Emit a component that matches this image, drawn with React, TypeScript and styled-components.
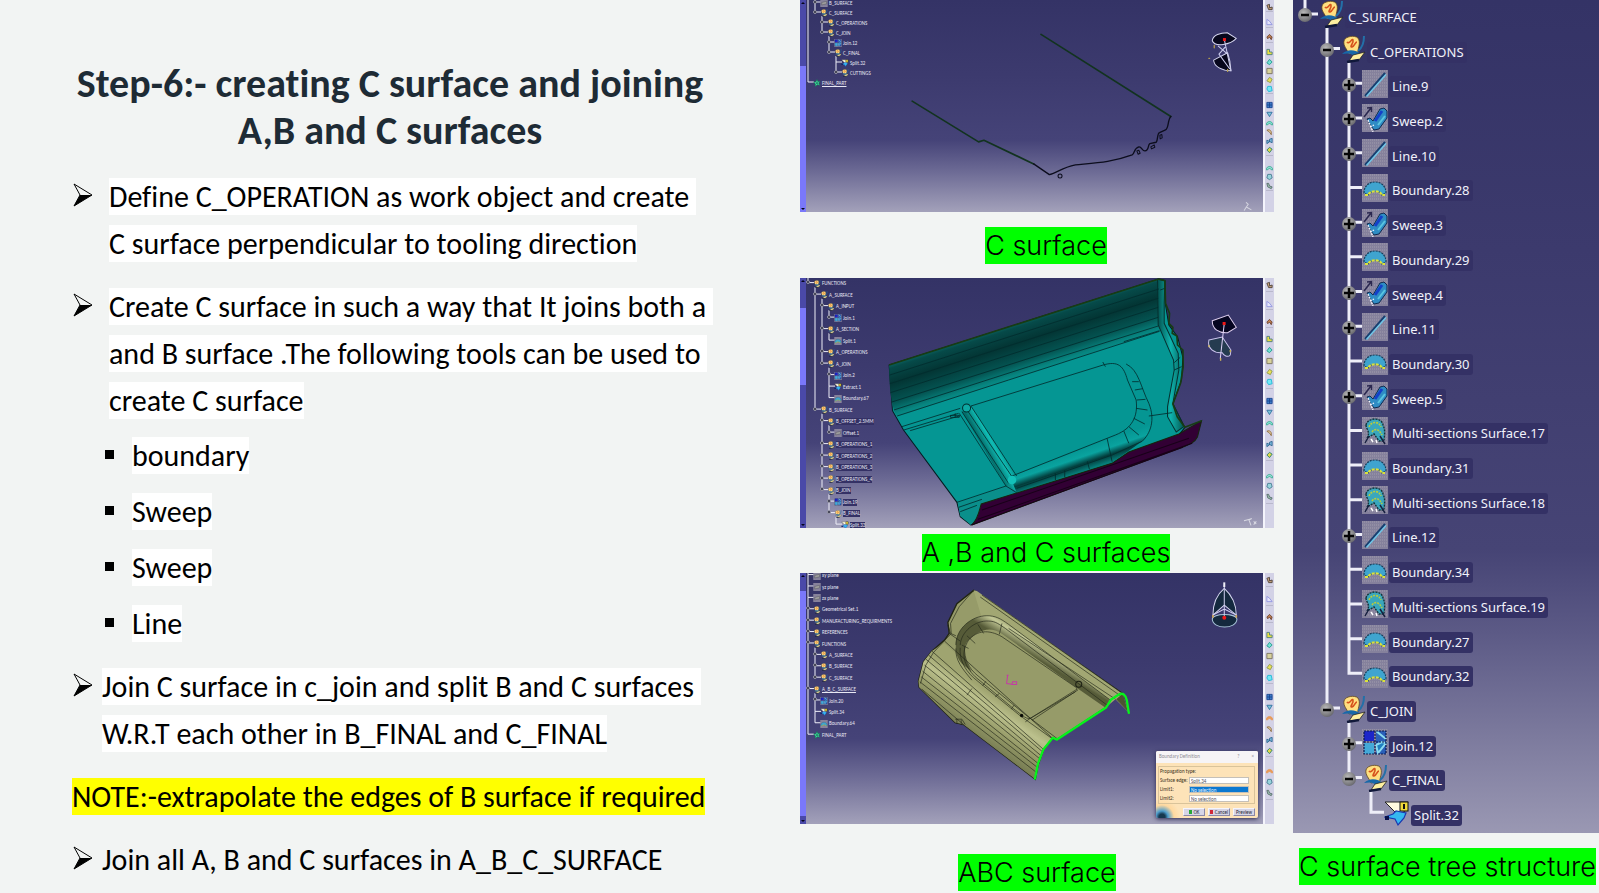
import React from 'react';
import styled, { createGlobalStyle } from 'styled-components';

const GlobalStyle = createGlobalStyle`
  * { box-sizing: border-box; }
  body { margin: 0; background: #f2f4f3; }
  ul { list-style: none; margin: 0; padding: 0; }
`;

const Slide = styled.main`
  display: grid;
  grid-template-columns: 800fr 474fr 325fr;
  min-height: 100vh;
  background: #f2f4f3;
  color: #000;
  font-family: Carlito, Lato, sans-serif;
  font-variant-ligatures: none;
`;

/* ---------- notes column ---------- */

const Notes = styled.section`
  display: flex;
  flex-direction: column;
  gap: 19px;
  padding: 60px 20px 0 72px;
  font-size: 30px;
  line-height: 47px;
`;

const Title = styled.h1`
  margin: 0;
  padding-right: 72px;
  font-size: 40px;
  line-height: 47px;
  font-weight: 700;
  color: #1e2b35;
  text-align: center;
  white-space: nowrap;
`;

const Points = styled.ul`
  display: flex;
  flex-direction: column;
  gap: 16px;
`;

const Point = styled.li<{ $indent: number }>`
  display: grid;
  grid-template-columns: ${(p) => p.$indent}px 1fr;
`;

const Arrow = styled.svg`
  width: 22px;
  height: 24px;
  margin-top: 10px;
`;

const SubPoints = styled.ul`
  display: flex;
  flex-direction: column;
  gap: 9px;
  margin-top: -8px;
  padding-left: 33px;
`;

const SubPoint = styled.li`
  display: flex;
  align-items: center;
  gap: 18px;
  &::before {
    content: '';
    width: 9px;
    height: 9px;
    margin-bottom: 3px;
    background: #000;
  }
`;

const Line = styled.div`
  white-space: pre;
`;

const Mark = styled.span<{ $color: string }>`
  background: ${(p) => p.$color};
`;

const ArrowBullet = () => (
  <Arrow viewBox="0 0 22 24" aria-hidden="true">
    <path d="M2 1 L20 12 L2 23 L8 12 Z" fill="#f2f4f3" stroke="#000" strokeWidth="1" />
    <path d="M8 12 L20 12 L2 23 Z" fill="#000" />
  </Arrow>
);

const Text = ({ lines, color = '#fff' }: { lines: string[]; color?: string }) => (
  <div>
    {lines.map((l) => (
      <Line key={l}>
        <Mark $color={color}>{l}</Mark>
      </Line>
    ))}
  </div>
);

/* ---------- captions ---------- */

const CaptionBar = styled.div<{ $height: number; $top: number; $shift?: number }>`
  min-height: ${(p) => p.$height}px;
  padding-top: ${(p) => p.$top}px;
  padding-left: ${(p) => p.$shift || 0}px;
  text-align: center;
`;

const Caption = styled.span`
  display: inline-block;
  background: #00ff00;
  font-family: Inter, 'Liberation Sans', sans-serif;
  font-weight: 300;
  font-size: 27px;
  line-height: 37px;
  white-space: nowrap;
`;

/* ---------- tree views ---------- */

type Kind = 'set' | 'line' | 'sweep' | 'boundary' | 'multi' | 'join' | 'split' | 'body' | 'plane';
type Node = { t: string; l: number; k: Kind; s?: '+' | '-'; u?: boolean };

const Glyph = ({ kind }: { kind: Kind }) => {
  const boxed = kind === 'line' || kind === 'sweep' || kind === 'boundary' || kind === 'multi' || kind === 'join' || kind === 'plane';
  return (
    <svg viewBox="0 0 26 28" width="100%" height="100%" aria-hidden="true">
      {boxed && <rect width="26" height="28" fill="#85819c" />}
      {boxed && <path d="M0 1H26M0 4H26M0 7H26M0 10H26M0 13H26M0 16H26M0 19H26M0 22H26M0 25H26" stroke="#a09cad" strokeWidth="1" strokeDasharray="1 1" />}
      {kind === 'line' && (
        <>
          <path d="M3 26L23 3" stroke="#173f70" strokeWidth="2" />
          <path d="M4.500 26.500L24 4.500" stroke="#6fc6e8" strokeWidth="1.500" />
        </>
      )}
      {kind === 'sweep' && (
        <>
          <path d="M2 13L9 4M5 4L9.500 3.500L9.500 8" stroke="#2b2850" strokeWidth="1.500" fill="none" />
          <path d="M5 15L8 14L11 17L18 5L22 4L25 7V14L17 25L12 26L9 22Z" fill="#2f8cc4" stroke="#102a50" strokeWidth="1" />
          <path d="M13 17L20 7" stroke="#1440c8" strokeWidth="3" />
          <path d="M16 21L23 12" stroke="#59c5e0" strokeWidth="2" />
          <path d="M6 16L11 28M8 23L12 21" stroke="#f4f4ff" strokeWidth="1.300" strokeDasharray="2 1" />
        </>
      )}
      {kind === 'boundary' && (
        <>
          <path d="M2 19C2 12 7 8 13 8C19 8 24 12 24 19L20 21C18 16 8 16 6 21Z" fill="#3fa4cf" stroke="#16405e" strokeWidth="1.200" strokeDasharray="2 1" />
          <path d="M3 21L6 21C8 16 18 16 20 21L23 21" fill="none" stroke="#dbe23a" strokeWidth="2" strokeDasharray="3 1" />
        </>
      )}
      {kind === 'multi' && (
        <>
          <path d="M4 8C6 0 20 0 21 8C24 14 22 20 22 24L17 24L12 17L5 21C9 15 4 12 4 8Z" fill="#3aa7bd" stroke="#12353c" strokeWidth="1.400" strokeDasharray="2 1" />
          <path d="M7 10C9 4 17 4 19 10M10 15C13 11 17 12 20 18" fill="none" stroke="#b9cc3c" strokeWidth="1.600" strokeDasharray="2 1" />
          <path d="M3 26L7 19M18 19L23 27" stroke="#182040" strokeWidth="1.500" />
          <path d="M9 22L11 25M14 23L15 26" stroke="#fff" strokeWidth="1.400" />
        </>
      )}
      {kind === 'join' && (
        <>
          <path d="M2 2H12V12H2Z" fill="#1c25c9" />
          <path d="M2 14H12V25H2Z" fill="#44a9d8" />
          <path d="M14 2H24V25H14Z" fill="#2a5fb8" />
          <path d="M14 2L24 10M14 16L20 13L24 14L16 24Z" stroke="#8bdcf0" strokeWidth="2" fill="#1f7fc0" />
          <path d="M2 13H24M13 2V25M2 2H24V25H2Z" stroke="#0c1a50" strokeWidth="1.200" strokeDasharray="2 1" fill="none" />
        </>
      )}
      {kind === 'set' && (
        <>
          <path d="M4 6C5 1 15 0 18 3C21 8 18 12 18 17L9 19C7 14 3 11 4 6Z" fill="#ffdf80" stroke="#5a4320" strokeWidth="0.800" />
          <path d="M7 7C9 10 12 3 13 5C14 8 9 12 12 12C15 11 15 7 17 7" fill="none" stroke="#d6521c" strokeWidth="1.600" />
          <path d="M24 1C24 8 22 13 18 16" fill="none" stroke="#2370a8" strokeWidth="2" />
          <path d="M2 19C8 13 16 15 21 19L16 23C12 18 8 18 2 19Z" fill="#1868a8" />
          <path d="M13 20L25 17L19 25L9 26Z" fill="#fff0a0" stroke="#222" strokeWidth="0.800" />
          <path d="M7 27L19 25" stroke="#10183a" strokeWidth="2.500" />
        </>
      )}
      {kind === 'split' && (
        <>
          <path d="M1 3L24 3L20 13L12 14Z" fill="#fffbe0" stroke="#222" strokeWidth="1" />
          <rect x="16" y="3" width="8" height="9" fill="#f0d93a" stroke="#111" />
          <path d="M20 5V10" stroke="#111" strokeWidth="2" />
          <path d="M1 18L9 15L12 12L22 14L20 19L14 26L11 20Z" fill="#35b8f0" stroke="#1a38b0" strokeWidth="1.200" />
          <rect x="1" y="17" width="4" height="4" fill="#08104a" />
        </>
      )}
      {kind === 'body' && (
        <>
          <path d="M13 2L16 9L24 8L19 14L23 22L14 20L7 26L7 17L1 11L9 10Z" fill="#42dba0" stroke="#0f7050" strokeWidth="2" />
          <circle cx="13" cy="14" r="3" fill="#0d5a48" />
        </>
      )}
      {kind === 'plane' && <path d="M5 12L22 8V17L5 21Z" fill="#9e9e9e" stroke="#4d4d55" strokeWidth="1.500" />}
    </svg>
  );
};

const GuideLines = styled.svg`
  position: absolute;
  top: 0;
  left: 0;
  width: 120px;
  height: 100%;
`;

/* connector lines: every row is ten units tall, x positions are in pixels */
const Guides = ({ nodes, first, step, stub, width }: { nodes: Node[]; first: number; step: number; stub: number; width: number }) => {
  const d: string[] = [];
  nodes.forEach((n, i) => {
    const x = first + n.l * step;
    let j = i - 1;
    while (j >= 0 && nodes[j].l > n.l) j--;
    const y = i * 10 + 4;
    const from = j < 0 ? 0 : nodes[j].l === n.l ? j * 10 + 4 : j * 10 + 8;
    d.push(`M${x} ${from}V${y}H${x + stub}`);
  });
  return (
    <GuideLines viewBox={`0 0 120 ${nodes.length * 10}`} preserveAspectRatio="none" aria-hidden="true">
      <path d={d.join('')} fill="none" stroke="#eeeef8" strokeWidth={width} vectorEffect="non-scaling-stroke" />
    </GuideLines>
  );
};

const BigTree = styled.ul`
  position: relative;
  flex: 1;
  display: grid;
  grid-auto-rows: 1fr;
  overflow: hidden;
  background: linear-gradient(#343366 0%, #3c3a6d 30%, #464475 66%, #5c5a86 76%, #9a98b3 100%);
`;

const BigRow = styled.li<{ $level: number }>`
  position: relative;
  display: flex;
  align-items: center;
  padding-left: ${(p) => 5 + p.$level * 22}px;
`;

const Toggle = styled.button<{ $hidden: boolean }>`
  flex: none;
  visibility: ${(p) => (p.$hidden ? 'hidden' : 'visible')};
  width: 14px;
  height: 14px;
  margin: 0 6px 4px 0;
  padding: 0;
  border: 0;
  border-radius: 50%;
  background: radial-gradient(circle at 40% 35%, #b9b9b9, #7a7a7e 60%, #4c4c55);
  svg { display: block; }
`;

const BigIcon = styled.span`
  flex: none;
  width: 26px;
  height: 28px;
  margin: 0 1px 6px 0;
`;

const BigLabel = styled.span`
  padding: 0 3px;
  border-radius: 3px;
  background: #343165;
  color: #f1f1fa;
  font-family: 'Noto Sans', 'Open Sans', sans-serif;
  font-size: 13px;
  line-height: 21px;
  white-space: nowrap;
`;

const structure: Node[] = [
  { t: 'C_SURFACE', l: 0, k: 'set', s: '-' },
  { t: 'C_OPERATIONS', l: 1, k: 'set', s: '-' },
  { t: 'Line.9', l: 2, k: 'line', s: '+' },
  { t: 'Sweep.2', l: 2, k: 'sweep', s: '+' },
  { t: 'Line.10', l: 2, k: 'line', s: '+' },
  { t: 'Boundary.28', l: 2, k: 'boundary' },
  { t: 'Sweep.3', l: 2, k: 'sweep', s: '+' },
  { t: 'Boundary.29', l: 2, k: 'boundary' },
  { t: 'Sweep.4', l: 2, k: 'sweep', s: '+' },
  { t: 'Line.11', l: 2, k: 'line', s: '+' },
  { t: 'Boundary.30', l: 2, k: 'boundary' },
  { t: 'Sweep.5', l: 2, k: 'sweep', s: '+' },
  { t: 'Multi-sections Surface.17', l: 2, k: 'multi' },
  { t: 'Boundary.31', l: 2, k: 'boundary' },
  { t: 'Multi-sections Surface.18', l: 2, k: 'multi' },
  { t: 'Line.12', l: 2, k: 'line', s: '+' },
  { t: 'Boundary.34', l: 2, k: 'boundary' },
  { t: 'Multi-sections Surface.19', l: 2, k: 'multi' },
  { t: 'Boundary.27', l: 2, k: 'boundary' },
  { t: 'Boundary.32', l: 2, k: 'boundary' },
  { t: 'C_JOIN', l: 1, k: 'set', s: '-' },
  { t: 'Join.12', l: 2, k: 'join', s: '+' },
  { t: 'C_FINAL', l: 2, k: 'set', s: '-' },
  { t: 'Split.32', l: 3, k: 'split' },
];

const StructureTree = () => (
  <BigTree>
    <Guides nodes={structure} first={12} step={22} stub={13} width={3} />
    {structure.map((n) => (
      <BigRow key={n.t} $level={n.l}>
        <Toggle type="button" $hidden={!n.s} aria-label={n.s === '+' ? 'Expand' : 'Collapse'}>
          <svg viewBox="0 0 14 14" width="14" height="14">
            <path d={n.s === '+' ? 'M2 7H12M7 2V12' : 'M3 7H11'} stroke="#050505" strokeWidth="2.500" />
          </svg>
        </Toggle>
        <BigIcon><Glyph kind={n.k} /></BigIcon>
        <BigLabel>{n.t}</BigLabel>
      </BigRow>
    ))}
  </BigTree>
);

/* ---------- modelling windows ---------- */

const Viewports = styled.section`
  display: flex;
  flex-direction: column;
`;

const Window = styled.div<{ $ratio: string }>`
  display: flex;
  width: 100%;
  aspect-ratio: ${(p) => p.$ratio};
  overflow: hidden;
`;

const Rail = styled.div<{ $from: number; $to: number }>`
  flex: 0 0 6px;
  display: flex;
  flex-direction: column;
  justify-content: space-between;
  align-items: center;
  background: linear-gradient(#4a49a8 ${(p) => p.$from}%, #7a78fa ${(p) => p.$from}% ${(p) => p.$to}%, #4a49a8 ${(p) => p.$to}%);
  &::before,
  &::after {
    content: '';
    border: 2px solid transparent;
  }
  &::before { border-bottom-color: #05051c; }
  &::after { border-top-color: #05051c; }
`;

const Scene = styled.div`
  position: relative;
  flex: 1;
  overflow: hidden;
  background: linear-gradient(#343366 0%, #3c3a6e 35%, #454378 66%, #6a6893 80%, #a3a1ba 100%);
`;

const Drawing = styled.svg`
  position: absolute;
  inset: 0;
  width: 100%;
  height: 100%;
`;

const SmallTree = styled.ul<{ $top: number; $height: number }>`
  position: absolute;
  top: ${(p) => p.$top}px;
  left: 0;
  height: ${(p) => p.$height}px;
  display: grid;
  grid-auto-rows: 1fr;
`;

const SmallRow = styled.li<{ $level: number; $underline?: boolean }>`
  position: relative;
  display: flex;
  align-items: center;
  gap: 1px;
  min-height: 0;
  padding-left: ${(p) => 7 + p.$level * 7}px;
  color: #e8e8f4;
  font-family: Carlito, Lato, sans-serif;
  font-size: 5px;
  line-height: 7px;
  white-space: nowrap;
  text-decoration: ${(p) => (p.$underline ? 'underline' : 'none')};
`;

const SmallIcon = styled.span`
  width: 8px;
  height: 8px;
  display: block;
  svg { display: block; }
`;

const SmallLabel = styled.span<{ $boxed: boolean }>`
  background: ${(p) => (p.$boxed ? '#343165' : 'transparent')};
`;

const Dot = styled.span`
  position: absolute;
  left: 0;
  width: 4px;
  height: 4px;
  border-radius: 50%;
  background: #26263a;
  border: 1px solid #9a9aa8;
`;

const DotSlot = styled.span<{ $level: number }>`
  position: absolute;
  left: ${(p) => p.$level * 7}px;
  top: 2px;
`;

const MiniTree = ({ nodes, top, height, boxedFrom = 99 }: { nodes: Node[]; top: number; height: number; boxedFrom?: number }) => (
  <SmallTree $top={top} $height={height}>
    <Guides nodes={nodes} first={2} step={7} stub={6} width={1} />
    {nodes.map((n, i) => (
      <SmallRow key={n.t} $level={n.l} $underline={n.u}>
        {n.s && <DotSlot $level={n.l}><Dot /></DotSlot>}
        <SmallIcon><Glyph kind={n.k} /></SmallIcon>
        <SmallLabel $boxed={i >= boxedFrom}>{n.t}</SmallLabel>
      </SmallRow>
    ))}
  </SmallTree>
);

const ToolBar = styled.div`
  flex: 0 0 11px;
  display: flex;
  flex-direction: column;
  padding: 2px 1px 0 1px;
  border-left: 2px solid #f4f4fc;
  background: #d3d2e6;
`;

const Tool = styled.button`
  flex: 11 1 0;
  min-height: 0;
  padding: 0;
  border: 0;
  background: none;
  display: flex;
  align-items: center;
  justify-content: center;
  svg { display: block; flex: none; }
`;

const Divider = styled.div<{ $size: number }>`
  flex: ${(p) => p.$size} 1 0;
  border-top: 1px solid #b9b8cc;
`;

const toolIcons: [string, string, string][] = [
  ['M1 2L4 1V5L7 4V7H3Z', '#4b4038', '#c9a27c'],
  ['M1 7V1L4 3L7 7Z', '#8f92e0', '#e4e4fa'],
  ['M1 4L4 1L7 4L6 7L4 4L2 6Z', '#6a4030', '#c08050'],
  ['M1 1H4V4H7V7H1Z', '#4d7d80', '#e8e040'],
  ['M4 1L7 4L4 7L1 5Z', '#1c9a8c', '#74e0d4'],
  ['M1 1H7V7H1Z', '#77705c', '#d8d29c'],
  ['M1 5L4 1L7 3L5 7Z', '#8a9a48', '#ecdf58'],
  ['M2 1H6L7 6L3 7L1 4Z', '#1cb7d6', '#74e8f4'],
  ['M1 1H7V7H1ZM4 1V7M1 4H7', '#1a4590', '#3c7cc8'],
  ['M1 2L7 2L4 7Z', '#2f70a0', '#7ec4d8'],
  ['M0 6C1 1 7 1 8 6L6 6C5 4 3 4 2 6Z', '#3aa890', '#7fe0d0'],
  ['M1 2C5 0 7 4 6 7L4 4Z', '#8c6c40', '#e8cfa0'],
  ['M1 3V7L4 5V2L7 1V6Z', '#2d6590', '#78b8dc'],
  ['M1 4L4 1L7 3L4 7Z', '#258068', '#e2d848'],
  ['M0 6C1 1 7 1 8 6L6 6C5 4 3 4 2 6Z', '#3aa890', '#8fe0d4'],
  ['M2 1L6 1L7 5L4 7L1 5Z', '#447a90', '#98d4dc'],
  ['M1 1L3 1L4 4L7 5L6 7L2 5Z', '#556a68', '#a0c4b4'],
];

const dividers: Record<number, number> = { 1: 7, 2: 6, 3: 6, 8: 7, 14: 9 };

const Tools = ({ arc = '' }: { arc?: string }) => (
  <ToolBar>
    {toolIcons.map(([d, stroke, fill], i) => (
      <React.Fragment key={i}>
        {dividers[i] && <Divider $size={dividers[i]} />}
        <Tool type="button" aria-label={`Tool ${i + 1}`}>
          <svg viewBox="0 0 8 8" width="7" height="8">
            <path d={d} fill={(i === 10 || i === 14) && arc ? arc : fill} stroke={(i === 10 || i === 14) && arc ? arc : stroke} />
          </svg>
        </Tool>
      </React.Fragment>
    ))}
    <Divider $size={25} />
  </ToolBar>
);

const treeOne: Node[] = [
  { t: 'B_SURFACE', l: 1, k: 'plane', s: '+' },
  { t: 'C_SURFACE', l: 1, k: 'set', s: '-' },
  { t: 'C_OPERATIONS', l: 2, k: 'set', s: '+' },
  { t: 'C_JOIN', l: 2, k: 'set', s: '-' },
  { t: 'Join.12', l: 3, k: 'join', s: '+' },
  { t: 'C_FINAL', l: 3, k: 'set', s: '-' },
  { t: 'Split.32', l: 4, k: 'split' },
  { t: 'CUTTINGS', l: 4, k: 'set', s: '+' },
  { t: 'FINAL_PART', l: 0, k: 'body', u: true },
];

const treeTwo: Node[] = [
  { t: 'FUNCTIONS', l: 0, k: 'set', s: '-' },
  { t: 'A_SURFACE', l: 1, k: 'set', s: '-' },
  { t: 'A_INPUT', l: 2, k: 'set', s: '-' },
  { t: 'Join.1', l: 3, k: 'join', s: '+' },
  { t: 'A_SECTION', l: 2, k: 'set', s: '-' },
  { t: 'Split.1', l: 3, k: 'boundary' },
  { t: 'A_OPERATIONS', l: 2, k: 'set', s: '+' },
  { t: 'A_JOIN', l: 2, k: 'set', s: '-' },
  { t: 'Join.2', l: 3, k: 'join', s: '+' },
  { t: 'Extract.1', l: 3, k: 'split' },
  { t: 'Boundary.67', l: 3, k: 'boundary' },
  { t: 'B_SURFACE', l: 1, k: 'set', s: '-' },
  { t: 'B_OFFSET_2.5MM', l: 2, k: 'set', s: '-' },
  { t: 'Offset.1', l: 3, k: 'plane', s: '+' },
  { t: 'B_OPERATIONS_1', l: 2, k: 'set', s: '+' },
  { t: 'B_OPERATIONS_2', l: 2, k: 'set', s: '+' },
  { t: 'B_OPERATIONS_3', l: 2, k: 'set', s: '+' },
  { t: 'B_OPERATIONS_4', l: 2, k: 'set', s: '+' },
  { t: 'B_JOIN', l: 2, k: 'set', s: '-' },
  { t: 'Join.19', l: 3, k: 'join', s: '+' },
  { t: 'B_FINAL', l: 3, k: 'set', s: '-' },
  { t: 'Split.33', l: 4, k: 'split' },
];

const treeThree: Node[] = [
  { t: 'xy plane', l: 0, k: 'plane' },
  { t: 'yz plane', l: 0, k: 'plane' },
  { t: 'zx plane', l: 0, k: 'plane' },
  { t: 'Geometrical Set.1', l: 0, k: 'set', s: '+' },
  { t: 'MANUFACTURING_REQUIRMENTS', l: 0, k: 'set', s: '+' },
  { t: 'REFERENCES', l: 0, k: 'set', s: '+' },
  { t: 'FUNCTIONS', l: 0, k: 'set', s: '-' },
  { t: 'A_SURFACE', l: 1, k: 'set', s: '+' },
  { t: 'B_SURFACE', l: 1, k: 'set', s: '+' },
  { t: 'C_SURFACE', l: 1, k: 'set', s: '+' },
  { t: 'A_B_C_SURFACE', l: 0, k: 'set', s: '-', u: true },
  { t: 'Join.20', l: 1, k: 'join', s: '+' },
  { t: 'Split.34', l: 1, k: 'split' },
  { t: 'Boundary.64', l: 1, k: 'boundary' },
  { t: 'FINAL_PART', l: 0, k: 'body' },
];

const CurveDrawing = () => (
  <Drawing viewBox="33 0 1369 635" preserveAspectRatio="none" aria-hidden="true">
    <g fill="none" strokeLinecap="round" strokeLinejoin="round">
      <path d="M351 303L550 425L566 420L715 491M737 103L1126 349" stroke="#12331f" strokeWidth="5" />
      <path d="M1126 349C1116 358 1120 385 1110 389L1092 397C1084 400 1088 420 1082 426L1063 430C1056 434 1062 450 1048 452C1040 452 1038 438 1030 440C1014 445 1018 460 1010 464C950 486 900 488 840 494C800 502 780 520 762 523L715 491" stroke="#0c0d1d" strokeWidth="4" />
      <path d="M1093 405L1099 403L1100 413L1094 416ZM1066 440L1076 434L1078 441L1068 446ZM1024 452L1030 450L1034 459L1028 462Z" stroke="#0c0d1d" strokeWidth="3" />
      <circle cx="794" cy="527" r="6" stroke="#0c0d1d" strokeWidth="3" />
      <path d="M1250 122C1252 104 1275 98 1295 98L1322 115C1305 134 1258 142 1250 122Z" fill="#07071c" stroke="#d6d6f0" strokeWidth="3" />
      <path d="M1254 180L1296 158C1302 175 1305 190 1306 212C1280 212 1255 200 1254 180Z" fill="#07071c" stroke="#d6d6f0" strokeWidth="3" />
      <path d="M1286 118L1306 212M1268 138L1296 162M1288 142L1270 162L1302 206" stroke="#cfcff0" strokeWidth="3" />
      <path d="M1256 136V143M1240 175H1242M1296 208V214" stroke="#b09a50" strokeWidth="4" />
      <path d="M1352 607L1358 612L1352 620L1366 628M1352 620L1346 630" stroke="#d5d5e0" strokeWidth="3" />
    </g>
    <rect x="1282" y="114" width="9" height="9" fill="#f01818" />
  </Drawing>
);

const TealDrawing = () => (
  <Drawing viewBox="33 24 1369 750" preserveAspectRatio="none" aria-hidden="true">
    <defs>
      <linearGradient id="wall" gradientUnits="userSpaceOnUse" x1="660" y1="155" x2="715" y2="325">
        <stop offset="0" stopColor="#0b6f6b" />
        <stop offset="0.100" stopColor="#064a49" />
        <stop offset="0.350" stopColor="#033534" />
        <stop offset="0.650" stopColor="#045250" />
        <stop offset="0.850" stopColor="#078580" />
        <stop offset="1" stopColor="#059693" />
      </linearGradient>
      <linearGradient id="ridge" gradientUnits="userSpaceOnUse" x1="560" y1="520" x2="600" y2="498">
        <stop offset="0" stopColor="#056e6b" />
        <stop offset="0.600" stopColor="#10bdb5" />
        <stop offset="1" stopColor="#078f8b" />
      </linearGradient>
      <linearGradient id="trough" gradientUnits="userSpaceOnUse" x1="850" y1="535" x2="872" y2="600">
        <stop offset="0" stopColor="#059693" />
        <stop offset="0.400" stopColor="#0aa39f" />
        <stop offset="0.700" stopColor="#033c3b" />
        <stop offset="1" stopColor="#067d79" />
      </linearGradient>
      <linearGradient id="edge" x1="0" y1="0" x2="1" y2="0">
        <stop offset="0" stopColor="#044e4c" />
        <stop offset="0.500" stopColor="#0fb5ae" />
        <stop offset="1" stopColor="#055450" />
      </linearGradient>
    </defs>
    <path d="M282 285L1090 27L1108 32L1110 105L1120 165L1146 200L1162 262L1158 330L1132 402L1168 472L1150 495L1000 548L950 580L565 704L548 742L527 765L495 740L485 697L325 480L292 422Z" fill="#059693" stroke="#041c20" strokeWidth="3" />
    <path d="M282 285L1090 27L1092 182L305 440C288 410 282 350 282 285Z" fill="url(#wall)" />
    <path d="M1086 28L1108 32L1106 100L1106 160L1148 250L1150 300L1132 400L1165 470L1142 486L1116 440L1116 410L1136 300L1134 270L1088 165Z" fill="url(#edge)" stroke="#06302f" strokeWidth="3" />
    <path d="M500 425L527 408L664 618L664 670L632 648Z" fill="url(#ridge)" />
    <path d="M645 620L960 500C1010 478 1030 440 1024 400L992 282C1020 290 1030 330 1050 380C1072 430 1078 480 1040 514L950 578L664 668Z" fill="url(#trough)" />
    <path d="M495 738L488 698L640 646L664 668L560 702L548 742L527 765Z" fill="#0a8f8b" />
    <path d="M530 765C550 745 552 720 558 702L950 580L1000 546L1150 492L1218 452L1206 500C1196 520 1180 524 1160 532Z" fill="#320034" stroke="#16250c" strokeWidth="3" />
    <g fill="none" stroke="#032d2e" strokeWidth="2.500">
      <path d="M284 315L1090 57M284 341L1088 85M286 368L1088 112M290 396L1088 142M296 420L700 290L1088 168M306 438L640 330L1092 184M320 470L495 415M326 480L490 430M345 482L495 437" />
      <path d="M527 408L920 286C970 270 985 290 996 330L1022 390C1028 440 1010 475 960 495L645 620" />
      <path d="M992 282C1030 300 1035 350 1060 400C1080 450 1065 490 1040 514" />
      <path d="M492 430L632 648L664 668M500 425L640 640M514 418L650 620M527 408L664 618" />
      <path d="M485 697L632 648M495 725L545 706M490 712L560 688M664 655L950 555L1040 514M780 610V630M808 600V622M876 574L882 598M935 505L950 575M985 483L1000 520M1010 335H1030M1018 360L1042 356M1024 390L1050 388M1022 415L1056 420M1015 445L1048 462M1000 470L1030 495M1060 438L1130 428" />
      <path d="M1092 182L985 215M1094 60L1108 55M1136 300L1158 290M1136 278L1154 262M466 436H492V442H466ZM480 430V442M922 276L930 290" />
    </g>
    <circle cx="514" cy="414" r="12" fill="#0da9a3" stroke="#032d2e" strokeWidth="3" />
    <circle cx="650" cy="630" r="13" fill="#13c0b8" />
    <g fill="none" strokeLinejoin="round">
      <path d="M282 285L1090 27L1108 32L1110 100L1122 130L1120 160L1132 172L1130 190L1144 198L1146 225L1162 240L1163 290L1155 340L1132 402L1145 440L1168 472L1218 452" stroke="#173c14" strokeWidth="5" />
      <path d="M528 765L1162 532M560 720L1180 505M548 748L1190 520" stroke="#180018" strokeWidth="3" />
    </g>
    <path d="M1250 152L1298 135L1322 172L1296 188C1270 190 1250 178 1250 152Z" fill="#050520" stroke="#e0d0f0" strokeWidth="3" />
    <path d="M1240 210L1280 201L1306 240L1304 255C1296 264 1284 256 1280 248C1256 250 1234 236 1240 210Z" fill="#253b50" stroke="#ccc4ee" strokeWidth="3" />
    <path d="M1286 160L1274 266" stroke="#dcd0f5" strokeWidth="3" />
    <path d="M1240 225V232M1304 240V247M1275 264V272" stroke="#cfb75c" strokeWidth="4" />
    <rect x="1281" y="156" width="9" height="9" fill="#f01818" />
    <path d="M1345 752L1368 746L1360 750L1366 766M1374 754L1382 762M1382 754L1374 764" fill="none" stroke="#d8d8e2" strokeWidth="3" />
  </Drawing>
);

const OliveDrawing = () => (
  <Drawing viewBox="33 24 1369 752" preserveAspectRatio="none" aria-hidden="true">
    <defs>
      <linearGradient id="skirt" gradientUnits="userSpaceOnUse" x1="610" y1="400" x2="530" y2="520">
        <stop offset="0" stopColor="#9fa470" />
        <stop offset="0.250" stopColor="#bcc18d" />
        <stop offset="0.600" stopColor="#969b68" />
        <stop offset="1" stopColor="#737850" />
      </linearGradient>
      <linearGradient id="rim" gradientUnits="userSpaceOnUse" x1="720" y1="210" x2="690" y2="260">
        <stop offset="0" stopColor="#8c915f" />
        <stop offset="0.400" stopColor="#c3c896" />
        <stop offset="1" stopColor="#565b38" />
      </linearGradient>
    </defs>
    <path d="M535 76L980 384L945 405L930 428L785 523L770 520L745 553L728 600L720 642L505 478L480 472L372 366L370 348L385 290L410 258L448 225L462 205L458 172L485 116Z" fill="#969b69" stroke="#202412" strokeWidth="4" />
    <path d="M410 258L448 235L770 520L745 553L728 600L720 642L505 478L480 472L372 366L370 348L385 290Z" fill="url(#skirt)" />
    <path d="M535 76L545 78L980 384L1000 442L960 402L930 428L900 405L560 160Z" fill="#a2a773" />
    <path d="M982 386L998 440L962 402Z" fill="#4d5232" />
    <path d="M482 240C482 190 530 152 575 152C600 152 615 160 640 178L945 405L930 428L850 372L620 206C580 178 545 200 520 225C500 245 505 280 530 320L500 296C486 280 480 262 482 240Z" fill="url(#rim)" />
    <g fill="none" stroke="#24281a" strokeWidth="2">
      <path d="M482 240C482 190 530 152 575 152C600 152 615 160 640 178L945 405M495 240C497 200 540 165 580 168C600 168 612 178 630 190L935 420" />
      <path d="M520 225C545 196 580 192 620 215L835 362C850 372 840 366 845 372L704 460C690 462 675 445 660 435L540 335C505 300 495 265 520 225" />
      <path d="M495 248C492 280 505 310 535 338L675 452L770 520M508 245C506 280 520 310 548 332L690 448L785 520M482 250C480 285 500 310 530 345" />
      <path d="M462 205L495 228M458 180L466 205L482 212M612 208L620 175M548 178L565 205M515 212L540 235M500 240L520 250M562 362L572 348M600 395L612 385M515 390L530 370M648 432L656 420M690 470L704 460L840 380M710 465L848 374" />
      <path d="M410 258L745 553M400 270L742 560M392 282L738 572M388 300L735 582M382 318L730 596M378 335L728 608M374 350L724 622M448 228L770 518M380 372L505 478M560 90L980 384M555 96L975 392M640 190L960 402M480 462L500 462L510 478M485 462V476M498 464V478" />
      <path d="M535 76L492 125L466 175L468 205L415 262L392 300L376 355" />
    </g>
    <circle cx="850" cy="357" r="9" fill="none" stroke="#1b1f12" strokeWidth="3" />
    <circle cx="679" cy="451" r="5" fill="#080a04" />
    <path d="M1000 443L994 405C990 388 982 382 970 388L946 404L932 427L785 523L772 518L744 553L728 595L719 640" fill="none" stroke="#07f31b" strokeWidth="7" strokeLinejoin="round" strokeLinecap="round" />
    <path d="M637 330L634 355L650 357M634 330H640M652 350H664V358H650Z" fill="none" stroke="#c43aa6" strokeWidth="3" />
    <path d="M1286 70C1262 90 1252 120 1252 150L1286 120L1322 150C1322 115 1308 90 1286 70Z" fill="#14293e" stroke="#d6d6f0" strokeWidth="3" />
    <path d="M1250 162C1250 144 1322 144 1324 162C1322 194 1252 194 1250 162Z" fill="#14293e" stroke="#a8c4d8" strokeWidth="3" />
    <path d="M1286 60V155M1252 150L1286 132L1322 150" fill="none" stroke="#d0d0f0" strokeWidth="3" />
    <path d="M1286 52V66" stroke="#f0f0f8" strokeWidth="6" />
    <path d="M1252 150V158M1322 150V158" stroke="#cfa75c" strokeWidth="5" />
    <circle cx="1286" cy="158" r="6" fill="#f01818" />
  </Drawing>
);

/* ---------- boundary dialog ---------- */

const Dialog = styled.form`
  position: absolute;
  right: 5px;
  bottom: 6px;
  width: 102px;
  height: 67px;
  border-radius: 2px;
  overflow: hidden;
  background: radial-gradient(circle at 6px 66px, #16384f 0 3px, #4d9ccc 6px, #ffd9a0 12px, #fde3b8 18px);
  box-shadow: 0 1px 4px #2a2850;
  font-family: Carlito, Lato, sans-serif;
  font-size: 5px;
  line-height: 7px;
  white-space: nowrap;
  color: #3a3020;
`;

const DialogTitle = styled.div`
  display: flex;
  gap: 12px;
  height: 12px;
  padding: 2px 4px 0 3px;
  background: #f6f4f6;
  color: #8e8c94;
  span:first-child { flex: 1; }
`;

const Fields = styled.div`
  display: grid;
  gap: 2px;
  margin: 3px 3px 0 2px;
  padding: 1px 5px 1px 1px;
  border: 1px solid #d9c39a;
`;

const Field = styled.label`
  display: grid;
  grid-template-columns: 29px 1fr;
  height: 7px;
`;

const FieldInput = styled.input<{ $active?: boolean }>`
  width: 100%;
  min-width: 0;
  height: 7px;
  padding: 0 1px;
  border: 1px solid #c5c0b8;
  background: ${(p) => (p.$active ? '#0b78d0' : '#fff')};
  color: ${(p) => (p.$active ? '#e8f4ff' : '#55505a')};
  font: inherit;
  line-height: 5px;
`;

const Actions = styled.div`
  display: flex;
  justify-content: flex-end;
  gap: 3px;
  padding: 4px 3px 0 0;
`;

const Action = styled.button`
  width: 22px;
  height: 8px;
  padding: 0;
  border: 1px solid #8a88a8;
  border-top-color: #f4f4fc;
  border-left-color: #f4f4fc;
  background: #d6d5e6;
  color: #2a2838;
  font: inherit;
  line-height: 5px;
  display: flex;
  align-items: center;
  justify-content: center;
  gap: 2px;
`;

const Lamp = styled.i<{ $color: string }>`
  width: 3px;
  height: 4px;
  background: ${(p) => p.$color};
`;

const BoundaryDialog = () => (
  <Dialog onSubmit={(e) => e.preventDefault()}>
    <DialogTitle><span>Boundary Definition</span><span>?</span><span>×</span></DialogTitle>
    <Fields>
      <Field as="div">Propagation&nbsp;type:</Field>
      <Field>Surface edge:<FieldInput defaultValue="Split.34" /></Field>
      <Field>Limit1:<FieldInput $active defaultValue="No selection" /></Field>
      <Field>Limit2:<FieldInput defaultValue="No selection" /></Field>
    </Fields>
    <Actions>
      <Action type="submit"><Lamp $color="#28a838" />OK</Action>
      <Action type="button"><Lamp $color="#d02838" />Cancel</Action>
      <Action type="button">Preview</Action>
    </Actions>
  </Dialog>
);

const Structure = styled.section`
  display: flex;
  flex-direction: column;
  padding-left: 19px;
`;

export default function App() {
  return (
    <>
      <GlobalStyle />
      <Slide>
        <Notes>
          <Title>Step-6:- creating C surface and joining<br />A,B and C surfaces</Title>
          <Points>
            <Point $indent={37}>
              <ArrowBullet />
              <Text lines={['Define C_OPERATION as work object and create ', 'C surface perpendicular to tooling direction']} />
            </Point>
            <Point $indent={37}>
              <ArrowBullet />
              <Text lines={['Create C surface in such a way that It joins both a ', 'and B surface .The following tools can be used to ', 'create C surface']} />
            </Point>
            <li>
              <SubPoints>
                {['boundary', 'Sweep', 'Sweep', 'Line'].map((t, i) => (
                  <SubPoint key={i}><Text lines={[t]} /></SubPoint>
                ))}
              </SubPoints>
            </li>
            <Point $indent={30}>
              <ArrowBullet />
              <Text lines={['Join C surface in c_join and split B and C surfaces ', 'W.R.T each other in B_FINAL and C_FINAL']} />
            </Point>
            <li>
              <Text color="#ffff00" lines={['NOTE:-extrapolate the edges of B surface if required']} />
            </li>
            <Point $indent={30}>
              <ArrowBullet />
              <Text color="transparent" lines={['Join all A, B and C surfaces in A_B_C_SURFACE']} />
            </Point>
          </Points>
        </Notes>

        <Viewports>
          <Window $ratio="474 / 212">
            <Rail $from={31} $to={100} />
            <Scene>
              <CurveDrawing />
              <MiniTree nodes={treeOne} top={-2} height={90} />
            </Scene>
            <Tools />
          </Window>
          <CaptionBar $height={66} $top={15} $shift={18}><Caption>C surface</Caption></CaptionBar>
          <Window $ratio="474 / 250">
            <Rail $from={12} $to={43} />
            <Scene>
              <TealDrawing />
              <MiniTree nodes={treeTwo} top={0} height={253} boxedFrom={12} />
            </Scene>
            <Tools />
          </Window>
          <CaptionBar $height={45} $top={6} $shift={18}><Caption>A ,B and C surfaces</Caption></CaptionBar>
          <Window $ratio="474 / 251">
            <Rail $from={7} $to={97} />
            <Scene>
              <OliveDrawing />
              <MiniTree nodes={treeThree} top={-3} height={171} />
              <BoundaryDialog />
            </Scene>
            <Tools arc="#e89a58" />
          </Window>
          <CaptionBar $height={69} $top={30}><Caption>ABC surface</Caption></CaptionBar>
        </Viewports>

        <Structure>
          <StructureTree />
          <CaptionBar $height={60} $top={15} $shift={3}><Caption>C surface tree structure</Caption></CaptionBar>
        </Structure>
      </Slide>
    </>
  );
}
